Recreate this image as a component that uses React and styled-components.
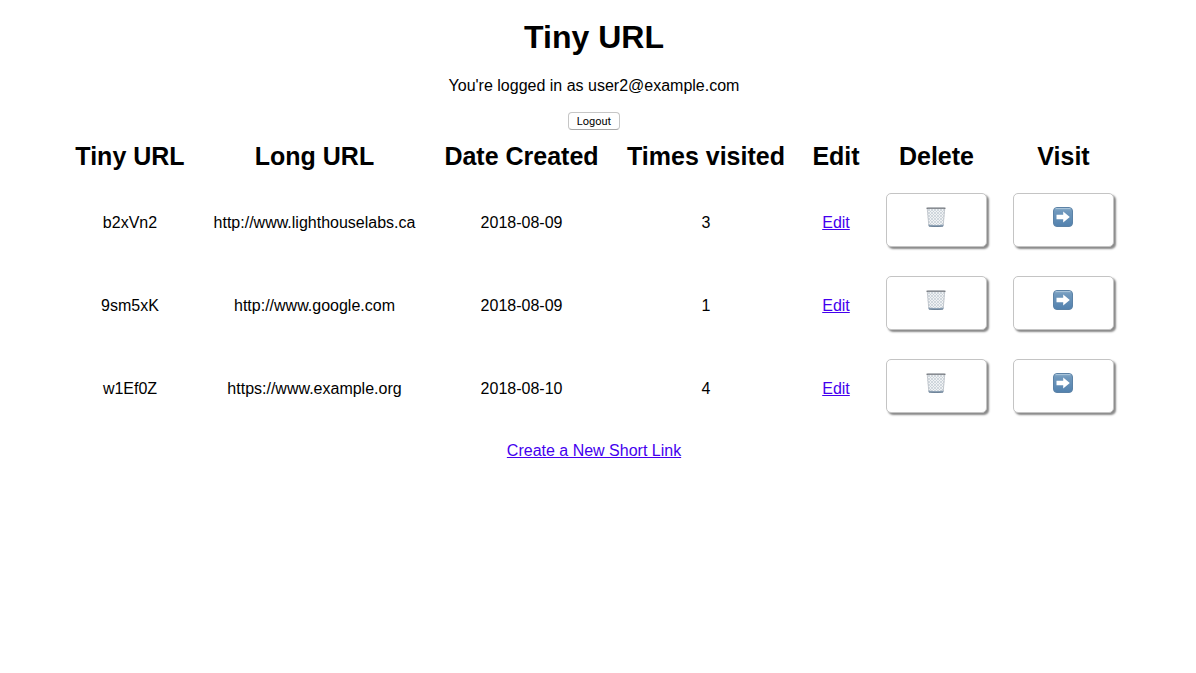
import React from "react";
import styled, { createGlobalStyle } from "styled-components";

const GlobalStyle = createGlobalStyle`
  body {
    margin: 0;
    background: #fff;
    color: #000;
    font-family: Helvetica, "Liberation Sans", Arial, sans-serif;
    font-size: 16px;
    line-height: 18px;
  }
`;

const Page = styled.main`
  display: flex;
  flex-direction: column;
  align-items: center;
  padding: 19px 10px 8px 2px;
  text-align: center;
`;

const Title = styled.h1`
  margin: 0 0 21px;
  font-size: 32px;
  line-height: 37px;
`;

const Status = styled.p`
  margin: 0 0 17px;
`;

const LogoutButton = styled.button`
  height: 18px;
  padding: 1px 8px 0;
  border: 1px solid #c6c6c6;
  border-bottom-color: #a8a8a8;
  border-radius: 4px;
  background: #fff;
  color: #000;
  font-family: Roboto, sans-serif;
  font-size: 11px;
  line-height: 16px;
`;

const LinksTable = styled.table`
  width: 90%;
  margin: 12px 0 13px;
  border-collapse: collapse;
  table-layout: fixed;
`;

const Column = styled.col`
  width: ${({ $size }) => $size}px;
`;

const HeaderCell = styled.th`
  height: 38px;
  padding: 0;
  font-size: 25px;
  line-height: 29px;
  vertical-align: top;
  white-space: nowrap;
`;

const Cell = styled.td`
  box-sizing: border-box;
  height: 83px;
  padding: 2px 0 0;
  vertical-align: middle;
  white-space: nowrap;
`;

const Link = styled.a`
  color: #40e;
  text-decoration: underline;
`;

const ActionButton = styled.button`
  display: flex;
  align-items: center;
  justify-content: center;
  width: 101px;
  height: 54px;
  margin: 0 auto 5px;
  padding: 0 2px 6px 0;
  border: 1px solid #c4c4c4;
  border-radius: 5px;
  background: #fff;
  box-shadow: 2px 2px 2px #888;
`;

const TrashIcon = () => (
  <svg width="20" height="20" viewBox="0 0 20 20" aria-hidden="true">
    <defs>
      <pattern id="mesh" width="3" height="3" patternUnits="userSpaceOnUse">
        <path d="M0 0L3 3M3 0L0 3" stroke="#c3cbd3" strokeWidth="0.7" />
      </pattern>
    </defs>
    <path d="M1 1H19L17.500 19H2.500Z" fill="#f0f2f4" />
    <path d="M1 1H19L17.500 19H2.500Z" fill="url(#mesh)" />
    <path d="M1.300 2L2.800 18.500M18.700 2L17.200 18.500" stroke="#bcc2c8" strokeWidth="0.8" />
    <path d="M2.500 17.500Q10 18.500 17.500 17.500L17.400 19.200Q10 20.200 2.600 19.200Z" fill="#8fa3b6" />
    <path d="M3 19.200Q10 20 17 19.200" stroke="#5f758b" strokeWidth="0.8" fill="none" />
    <rect x="0.300" y="0.400" width="19.400" height="1.700" rx="0.800" fill="#7c8086" />
    <path d="M2 1H18" stroke="#a5aaaf" strokeWidth="0.6" />
  </svg>
);

const ArrowIcon = () => (
  <svg width="20" height="20" viewBox="0 0 20 20" aria-hidden="true">
    <defs>
      <linearGradient id="tile" x2="0" y2="1">
        <stop offset="0" stopColor="#91b3ce" />
        <stop offset="0.18" stopColor="#7199bd" />
        <stop offset="1" stopColor="#5281ae" />
      </linearGradient>
    </defs>
    <rect x="0.500" y="0.500" width="19" height="19" rx="3.500" fill="url(#tile)" stroke="#5c82a6" />
    <path d="M3 1.500H17" stroke="#a8c4da" strokeLinecap="round" />
    <path d="M3.500 7.700H10.200V4.500L16.800 10L10.200 15.500V12.300H3.500Z" fill="#fff" />
  </svg>
);

const columns = [
  { label: "Tiny URL", size: 138 },
  { label: "Long URL", size: 231 },
  { label: "Date Created", size: 183 },
  { label: "Times visited", size: 186 },
  { label: "Edit", size: 74 },
  { label: "Delete", size: 127 },
  { label: "Visit", size: 127 },
];

const links = [
  { id: "b2xVn2", url: "http://www.lighthouselabs.ca", created: "2018-08-09", visits: 3 },
  { id: "9sm5xK", url: "http://www.google.com", created: "2018-08-09", visits: 1 },
  { id: "w1Ef0Z", url: "https://www.example.org", created: "2018-08-10", visits: 4 },
];

export default function App() {
  return (
    <>
      <GlobalStyle />
      <Page>
        <Title>Tiny URL</Title>
        <Status>You're logged in as user2@example.com</Status>
        <LogoutButton type="button">Logout</LogoutButton>
        <LinksTable>
          <colgroup>
            {columns.map(({ label, size }) => (
              <Column key={label} $size={size} />
            ))}
          </colgroup>
          <thead>
            <tr>
              {columns.map(({ label }) => (
                <HeaderCell key={label} scope="col">{label}</HeaderCell>
              ))}
            </tr>
          </thead>
          <tbody>
            {links.map(({ id, url, created, visits }) => (
              <tr key={id}>
                <Cell>{id}</Cell>
                <Cell>{url}</Cell>
                <Cell>{created}</Cell>
                <Cell>{visits}</Cell>
                <Cell><Link href={`#edit-${id}`}>Edit</Link></Cell>
                <Cell>
                  <ActionButton type="button" aria-label={`Delete ${id}`}><TrashIcon /></ActionButton>
                </Cell>
                <Cell>
                  <ActionButton type="button" aria-label={`Visit ${id}`}><ArrowIcon /></ActionButton>
                </Cell>
              </tr>
            ))}
          </tbody>
        </LinksTable>
        <Link href="#new">Create a New Short Link</Link>
      </Page>
    </>
  );
}
